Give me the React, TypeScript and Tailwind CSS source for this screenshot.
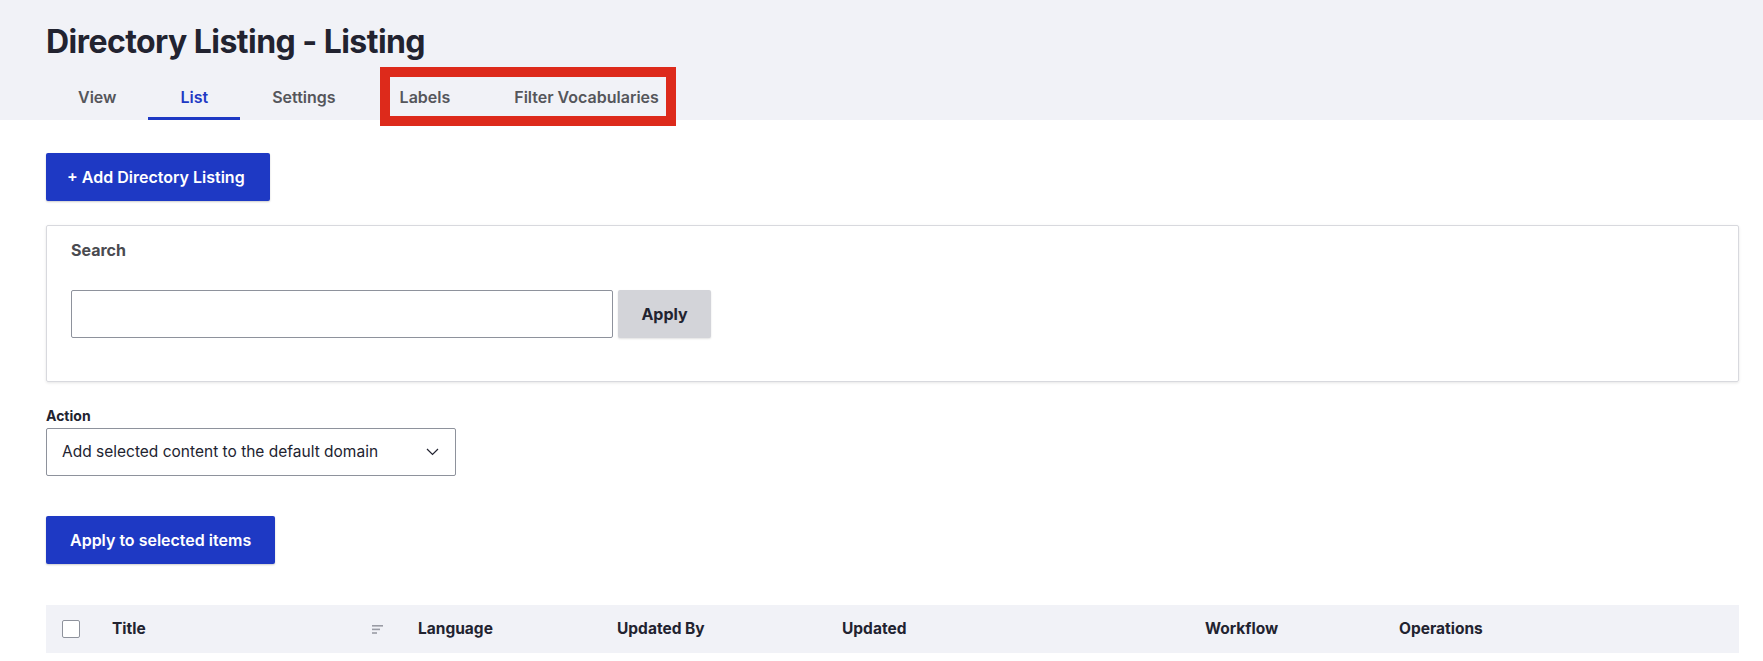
const tabs = ["View", "List", "Settings"];
const extraTabs = ["Labels", "Filter Vocabularies"];

const columns = [
  { label: "Title", sort: true },
  { label: "Language" },
  { label: "Updated By" },
  { label: "Updated" },
  { label: "Workflow" },
  { label: "Operations" },
];

const Tab = ({ label, active }: { label: string; active?: boolean }) => (
  <a
    className={
      active
        ? "block px-8 pt-[13px] pb-[8px] leading-6 text-base font-semibold border-b-[3px] border-[#1e39c4] text-[#1e39c4]"
        : "block px-8 pt-[13px] pb-[8px] leading-6 text-base font-semibold border-b-[3px] border-transparent text-[#55565b]"
    }
  >
    {label}
  </a>
);

const App = () => {
  return (
    <div className="min-h-screen bg-white font-['Inter',sans-serif] text-[#222330]">
      <header className="bg-[#f1f2f7] pl-[46px] pt-[22px] h-[120px]">
        <h1 className="text-[32px] leading-[40px] font-bold tracking-[-0.55px]">Directory Listing - Listing</h1>
        <nav className="flex mt-[10px]">
          {tabs.map(t => (
            <Tab key={t} label={t} active={t === "List"} />
          ))}
          <div className="relative flex">
            {extraTabs.map(t => (
              <Tab key={t} label={t} />
            ))}
            <div className="absolute left-[12px] right-[15px] top-[-5px] bottom-[-6px] border-[10px] border-[#dd2a1b] pointer-events-none" />
          </div>
        </nav>
      </header>

      <main className="pl-[46px] pr-[24px] pt-[33px]">
        <button className="h-12 pl-[21px] pr-[25px] bg-[#1e39c4] text-white text-base font-semibold rounded-[2px] shadow-[0_1px_2px_rgba(0,0,0,0.2)]">
          + Add Directory Listing
        </button>

        <fieldset className="mt-6 border border-[#d8d9de] rounded-[2px] shadow-[0_1px_3px_rgba(0,0,0,0.1)] pt-[12px] px-6 pb-[43px]">
          <div className="text-base leading-6 font-bold text-[#4a4b50]">Search</div>
          <div className="flex items-center mt-[28px]">
            <input className="w-[542px] h-12 border border-[#8e929c] rounded-[2px] px-4 text-base outline-none" />
            <button className="ml-[5px] w-[93px] h-12 bg-[#d3d4d9] rounded-[2px] text-base font-bold text-[#222330] shadow-[0_1px_2px_rgba(0,0,0,0.12)]">
              Apply
            </button>
          </div>
        </fieldset>

        <div className="mt-6 text-sm leading-5 font-bold">Action</div>
        <div className="mt-[2px] w-[410px] h-12 border border-[#8e929c] rounded-[2px] flex items-center justify-between pl-[15px] pr-[16px]">
          <span className="text-[15.5px]">Add selected content to the default domain</span>
          <svg width="13" height="8" viewBox="0 0 13 8" fill="none">
            <polyline points="1,1 6.5,6.5 12,1" stroke="#222330" strokeWidth="1.2" />
          </svg>
        </div>

        <button className="mt-10 h-12 px-6 bg-[#1e39c4] text-white text-base font-semibold rounded-[2px] shadow-[0_1px_2px_rgba(0,0,0,0.2)]">
          Apply to selected items
        </button>

        <div className="mt-[41px] h-12 bg-[#f1f2f7] grid grid-cols-[50px_306px_199px_225px_363px_194px_1fr] items-center text-[15.5px] font-bold">
          <div className="pl-4 flex items-center">
            <span className="block w-[18px] h-[18px] bg-white border border-[#8e929c] rounded-[2px]" />
          </div>
          {columns.map(c => (
            <div key={c.label} className="pl-4 flex items-center justify-between pr-[18px]">
              <span>{c.label}</span>
              {c.sort && (
                <svg width="12" height="9" viewBox="0 0 12 9" fill="none">
                  <rect x="0" y="0" width="11" height="1.6" fill="#9a9ca5" />
                  <rect x="0" y="3.6" width="8" height="1.6" fill="#9a9ca5" />
                  <rect x="0" y="7.2" width="5" height="1.6" fill="#9a9ca5" />
                </svg>
              )}
            </div>
          ))}
        </div>
      </main>
    </div>
  );
};

export default App;
